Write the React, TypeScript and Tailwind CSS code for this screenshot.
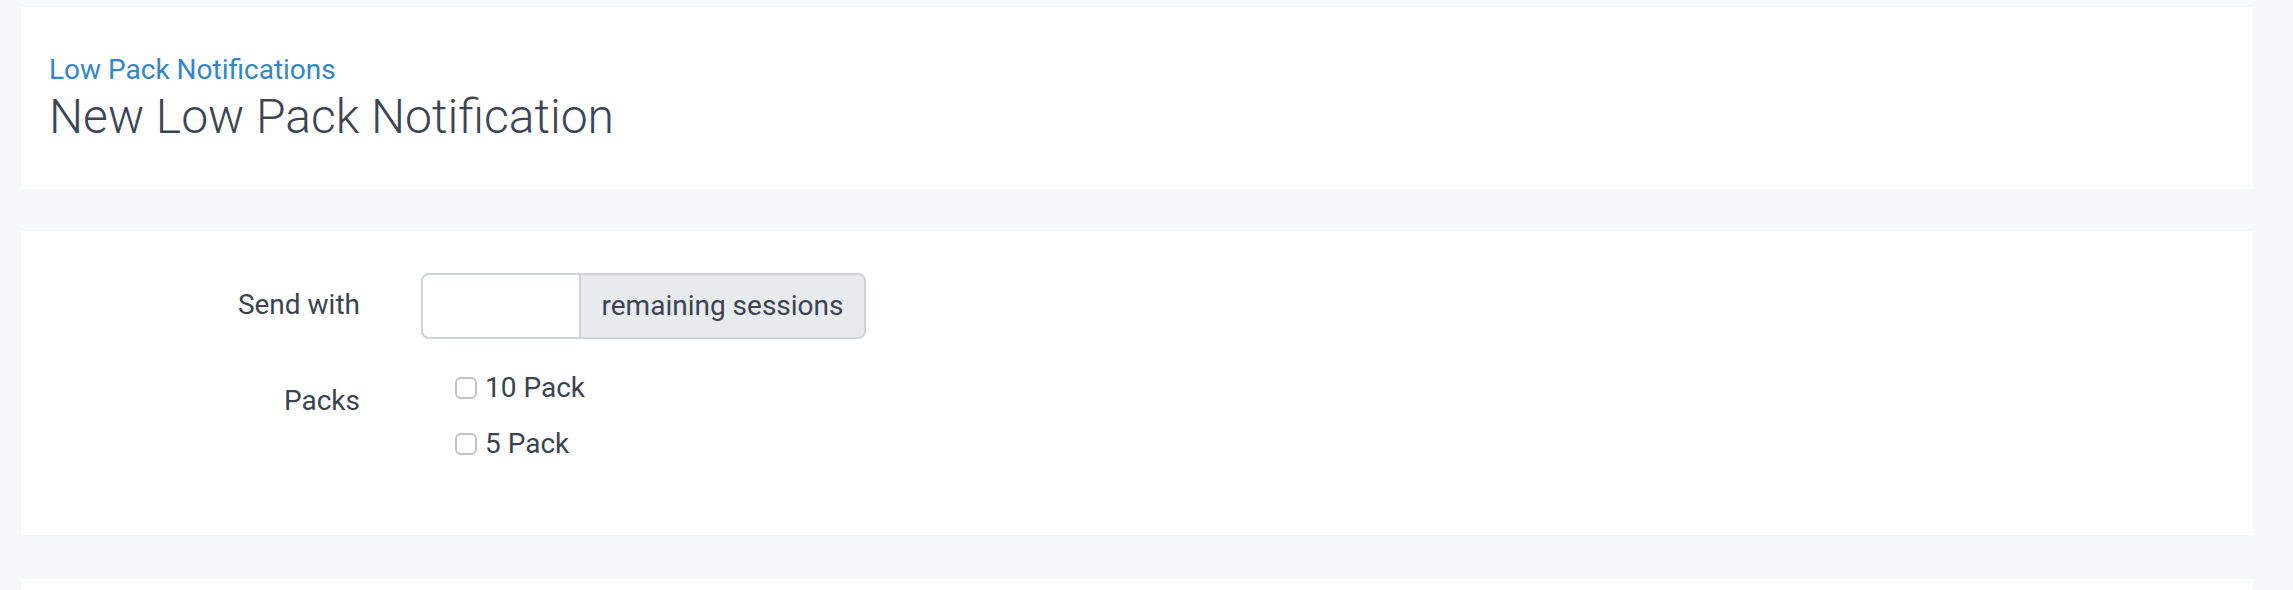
const packs = ["10 Pack", "5 Pack"];

export default function App() {
  return (
    <div
      className="min-h-[590px] bg-[#f7f8fa] pt-[7px] pl-[21px] pr-[40px] text-[#3b4351]"
      style={{ fontFamily: "Roboto, 'Liberation Sans', sans-serif" }}
    >
      {/* page header */}
      <div className="h-[182px] bg-white pl-[28px] pt-[45px]">
        <a className="block text-[28px] leading-[36px] text-[#3187c9]" href="#">
          Low Pack Notifications
        </a>
        <h1 className="mt-[1px] text-[48px] font-light leading-[56px] text-[#3d4554]">
          New Low Pack Notification
        </h1>
      </div>

      {/* form */}
      <div className="mt-[42px] h-[304px] bg-white pt-[42px]">
        <div className="flex items-center">
          <label className="w-[339px] pb-[2px] text-right text-[28px] leading-[40px]">
            Send with
          </label>
          <div className="ml-[61px] flex h-[66px]">
            <input
              type="text"
              className="w-[160px] rounded-l-[8px] border-2 border-[#ced3d9] bg-white px-4 text-[28px] outline-none"
            />
            <span className="flex w-[285px] items-center justify-center rounded-r-[8px] border-2 border-l-0 border-[#ced3d9] bg-[#e8ebee] text-[28px]">
              remaining sessions
            </span>
          </div>
        </div>

        <div className="mt-[29px] flex items-start">
          <label className="w-[339px] pt-[13px] text-right text-[28px] leading-[40px]">
            Packs
          </label>
          <div className="ml-[95px] flex flex-col gap-[16px]">
            {packs.map((p) => (
              <label key={p} className="flex h-[40px] items-center gap-[8px] text-[28px]">
                <input
                  type="checkbox"
                  className="h-[22px] w-[22px] appearance-none rounded-[6px] border-2 border-[#c3c3c3] bg-white"
                />
                {p}
              </label>
            ))}
          </div>
        </div>
      </div>

      <div className="mt-[44px] h-[40px] bg-white" />
    </div>
  );
}
